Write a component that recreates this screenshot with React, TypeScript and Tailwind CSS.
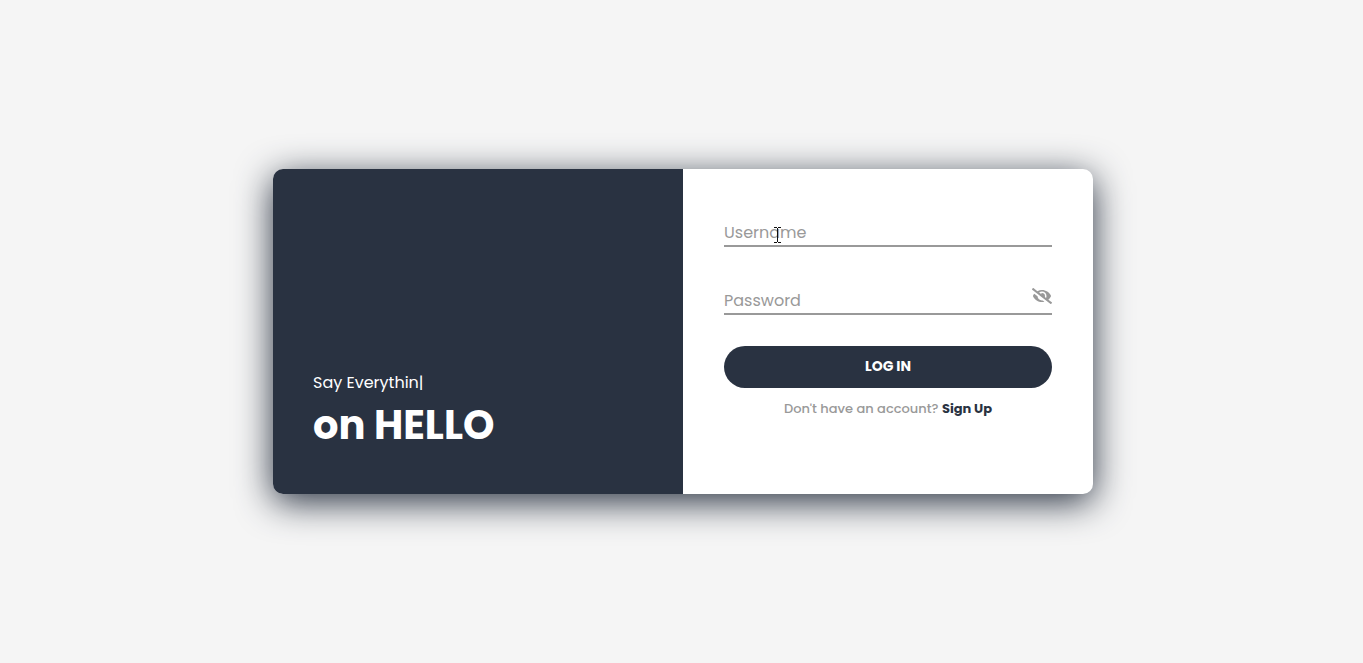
import { useState } from "react";
import { FaEyeSlash, FaEye } from "react-icons/fa";

function TextCursor() {
  return (
    <svg
      className="pointer-events-none absolute left-[50px] top-[10px] h-4 w-[7px]"
      viewBox="0 0 7 16"
      fill="none"
      stroke="#111"
      shapeRendering="crispEdges"
      aria-hidden="true"
    >
      <path d="M0 .5h3M4 .5h3M3.500 1v14M0 15.500h3M4 15.500h3" />
    </svg>
  );
}

const inputClass =
  "block h-[30px] w-full border-b-2 border-[#999] bg-transparent pt-[3px] text-base text-[#293241] outline-none placeholder:text-[#999]";

export default function App() {
  const [visible, setVisible] = useState(false);

  return (
    <main className="flex min-h-screen items-center justify-center bg-[#f5f5f5] pl-[3px] font-['Poppins','Inter',sans-serif]">
      <div className="grid min-h-[325px] w-full max-w-[820px] grid-cols-2 overflow-hidden rounded-[10px] bg-white shadow-[0_8px_36px_#293241]">
        <section className="flex flex-col justify-end bg-[#293241] px-10 pb-11 text-white">
          <p className="text-base leading-6">Say Everythin|</p>
          <h1 className="mt-[5px] text-[40px] font-bold leading-[50px]">on HELLO</h1>
        </section>
        <form className="px-[41px] pt-12" onSubmit={(e) => e.preventDefault()}>
          <div className="relative">
            <input type="text" aria-label="Username" placeholder="Username" className={inputClass} />
            <TextCursor />
          </div>
          <div className="relative mt-[38px]">
            <input
              type={visible ? "text" : "password"}
              aria-label="Password"
              placeholder="Password"
              className={inputClass}
            />
            <button
              type="button"
              aria-label="Toggle password visibility"
              onClick={() => setVisible(!visible)}
              className="absolute right-0 top-px text-xl text-[#999]"
            >
              {visible ? <FaEye /> : <FaEyeSlash />}
            </button>
          </div>
          <button
            type="submit"
            className="mt-[31px] block h-[42px] w-full rounded-full bg-[#293241] pb-[2px] text-sm font-bold text-white"
          >
            LOG IN
          </button>
          <p className="mt-[11px] text-center text-[13px] font-medium leading-5 text-[#999]">
            Don't have an account?{" "}
            <a href="#signup" className="font-bold text-[#293241]">
              Sign Up
            </a>
          </p>
        </form>
      </div>
    </main>
  );
}
